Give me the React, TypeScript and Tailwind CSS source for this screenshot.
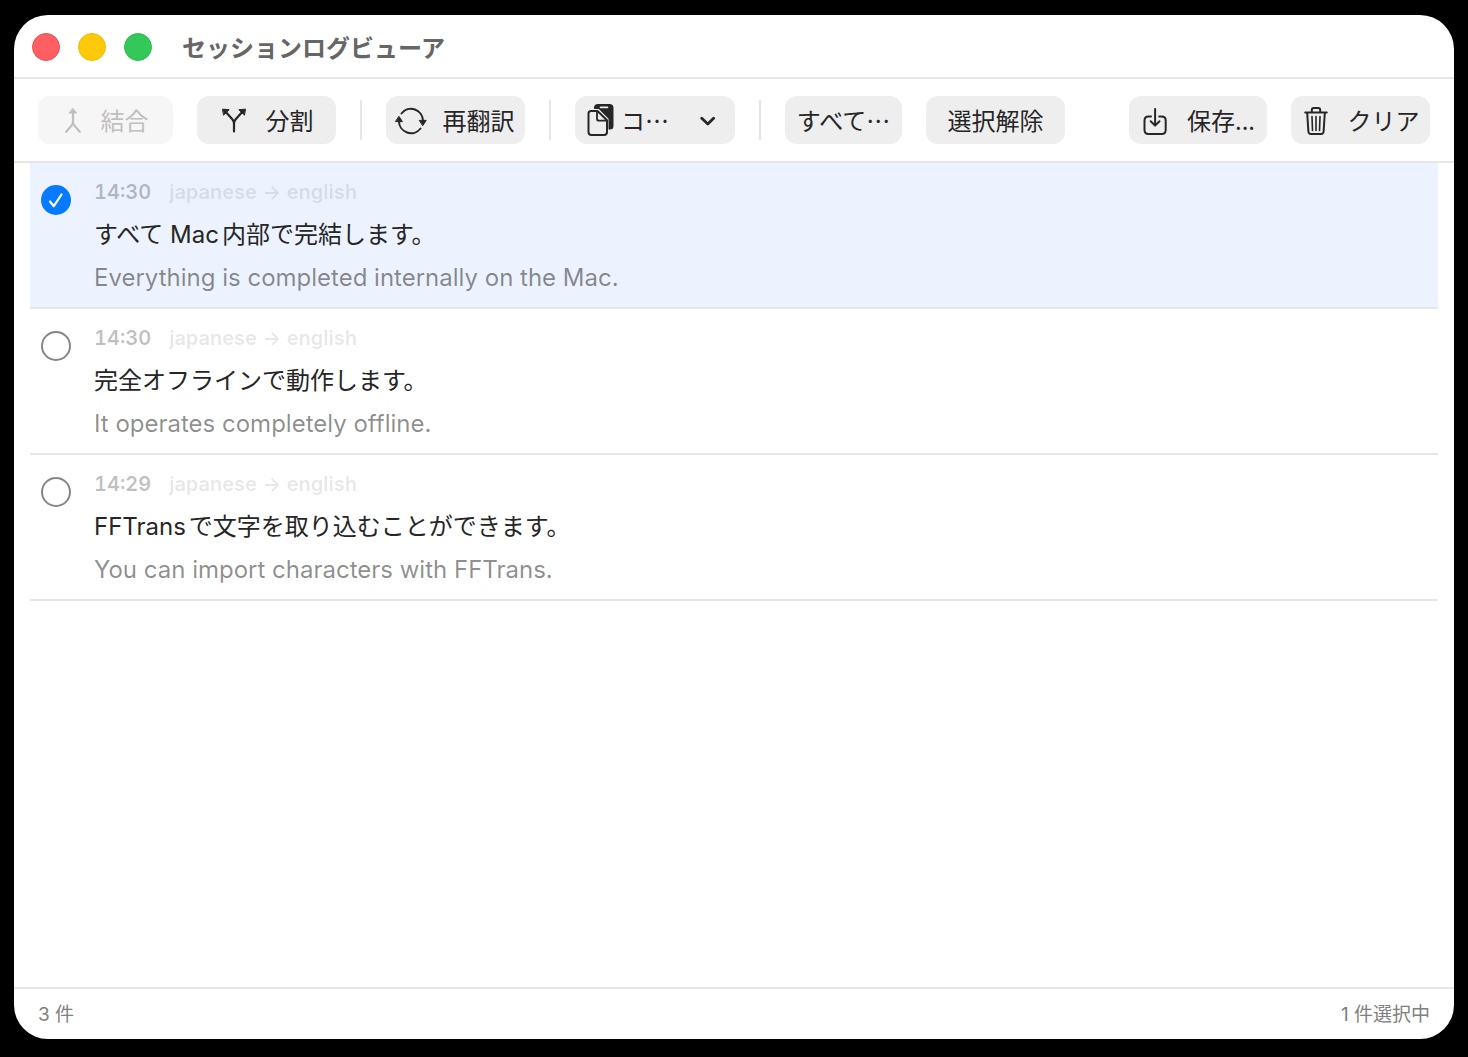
import React, { useState } from "react";
import clsx from "clsx";

interface LogEntry {
  id: number;
  time: string;
  from: string;
  to: string;
  source: string;
  translated: string;
}

const entries: LogEntry[] = [
  {
    id: 1,
    time: "14:30",
    from: "japanese",
    to: "english",
    source: "すべて Mac内部で完結します。",
    translated: "Everything is completed internally on the Mac.",
  },
  {
    id: 2,
    time: "14:30",
    from: "japanese",
    to: "english",
    source: "完全オフラインで動作します。",
    translated: "It operates completely offline.",
  },
  {
    id: 3,
    time: "14:29",
    from: "japanese",
    to: "english",
    source: "FFTransで文字を取り込むことができます。",
    translated: "You can import characters with FFTrans.",
  },
];

/* ---------- icons ---------- */

const MergeIcon = () => (
  <svg className="w-6 h-7 shrink-0" viewBox="0 0 24 28" fill="none" stroke="currentColor" strokeWidth="2.200" strokeLinecap="round" strokeLinejoin="round" aria-hidden="true">
    <path d="M12 6v10c0 1.600-.5 2.700-1.700 3.900L5.200 25.800M12 16c0 1.600.5 2.700 1.700 3.900l5.100 5.900" />
    <path d="M12 2.600L15.600 7H8.400z" fill="currentColor" strokeWidth="1" />
  </svg>
);

const SplitIcon = () => (
  <svg className="w-6 h-7 shrink-0" viewBox="0 0 24 28" fill="none" stroke="currentColor" strokeWidth="2.200" strokeLinecap="round" strokeLinejoin="round" aria-hidden="true">
    <path d="M12 25.500v-8c0-1.800-.5-3-1.700-4.300L4.300 6.500M12 17.500c0-1.800.5-3 1.700-4.300l6-6.700" />
    <path d="M.8 3.200l6.400.5-5.400 5.200zM23.200 3.200l-6.400.5 5.400 5.200z" fill="currentColor" strokeWidth="1" />
  </svg>
);

const RetranslateIcon = () => (
  <svg className="w-8 h-7 shrink-0 overflow-visible" viewBox="0 0 32 28" fill="none" stroke="currentColor" strokeWidth="2" strokeLinecap="round" aria-hidden="true">
    <path d="M6.500 7.500A12 12 0 0 1 28 15" />
    <path d="M25.500 22.500A12 12 0 0 1 4 15" />
    <path d="M24.600 14.400h6.600l-3.300 5zM.8 15.600h6.600l-3.300-5z" fill="currentColor" strokeWidth="1" strokeLinejoin="round" />
  </svg>
);

const CopyIcon = () => (
  <svg className="w-7 h-8 shrink-0" viewBox="0 0 28 32" fill="none" aria-hidden="true">
    <path d="M7 5V4q0-4 4-4h11.500Q26.500 0 26.500 4v18q0 3.500-3.500 3.500h-1.500V14.800L11.800 5z" fill="currentColor" />
    <path d="M13.500 3.400h7" stroke="#eeeeee" strokeWidth="1.600" strokeLinecap="round" />
    <path d="M4 7h6.500l9.500 9.200V28q0 3-3 3H4.500q-3 0-3-3V9.500Q1.500 7 4 7z" fill="#eeeeee" stroke="currentColor" strokeWidth="2" strokeLinejoin="round" />
    <path d="M10 7.500v7.200q0 2 2 2h7.500" stroke="currentColor" strokeWidth="1.800" />
  </svg>
);

const ChevronIcon = () => (
  <svg className="w-4 h-4 shrink-0" viewBox="0 0 16 16" fill="none" stroke="currentColor" strokeWidth="2.800" strokeLinecap="round" strokeLinejoin="round" aria-hidden="true">
    <path d="M2.800 6.300L8.800 12l5.800-5.700" />
  </svg>
);

const SaveIcon = () => (
  <svg className="w-6 h-7 shrink-0 overflow-visible" viewBox="0 0 24 28" fill="none" stroke="currentColor" strokeWidth="2" strokeLinecap="round" strokeLinejoin="round" aria-hidden="true">
    <path d="M8 10.500H5.500q-4 0-4 4V24q0 4 4 4h13.200q4 0 4-4v-9.500q0-4-4-4h-2.500" />
    <path d="M12.100 3v16M7.700 15.200l4.400 4.400 4.400-4.400" />
  </svg>
);

const TrashIcon = () => (
  <svg className="w-6 h-7 shrink-0 overflow-visible" viewBox="0 0 24 28" fill="none" stroke="currentColor" strokeWidth="2" strokeLinecap="round" strokeLinejoin="round" aria-hidden="true">
    <path d="M1.200 6.500h21.600M7.800 6V4q0-2 2-2h4.400q2 0 2 2v2M3.200 7l1.200 18.500q.2 2.500 2.600 2.500h10q2.400 0 2.600-2.500L20.800 7" />
    <path d="M8 10.500l.5 14M12 10.500v14M16 10.500l-.5 14" strokeWidth="1.600" />
  </svg>
);

/* ---------- toolbar ---------- */

interface ToolButtonProps extends React.ButtonHTMLAttributes<HTMLButtonElement> {
  className?: string;
}

const ToolButton: React.FC<ToolButtonProps> = ({ className, children, ...rest }) => (
  <button
    type="button"
    className={clsx(
      "flex h-12 shrink-0 items-center justify-center whitespace-nowrap rounded-xl bg-[#eeeeee] font-['Noto_Sans_CJK_JP',sans-serif] text-[#262626] disabled:bg-[#f6f6f6] disabled:text-[#bfbfbf]",
      className
    )}
    {...rest}
  >
    {children}
  </button>
);

const Divider = () => <div className="h-10 w-0.5 shrink-0 bg-[#e6e6e6]" />;

/* ---------- list row ---------- */

interface RowProps {
  entry: LogEntry;
  checked: boolean;
  onToggle: () => void;
}

const LogRow: React.FC<RowProps> = ({ entry, checked, onToggle }) => (
  <li className={clsx("border-b-2 border-[#e6e6e6]", checked && "bg-[#ecf3fe]")}>
    <label className="flex gap-[23px] py-4 pl-[11px]">
      <span className="mt-1.5 grid size-[30px] shrink-0 place-items-center">
        <input
          type="checkbox"
          checked={checked}
          onChange={onToggle}
          className="col-start-1 row-start-1 size-[30px] appearance-none rounded-full border-2 border-[#868686] checked:border-[#087aff] checked:bg-[#087aff]"
        />
        {checked && (
          <svg className="pointer-events-none col-start-1 row-start-1 size-4" viewBox="0 0 16 16" fill="none" stroke="#fff" strokeWidth="2.200" strokeLinecap="round" strokeLinejoin="round" aria-hidden="true">
            <path d="M2 9.500l3.800 4.700L13.500 2.500" />
          </svg>
        )}
      </span>
      <span className="flex min-w-0 flex-col gap-3">
        <span className="flex gap-[18px] text-xl leading-[26px] font-semibold tabular-nums">
          <span className="text-black/25">{entry.time}</span>
          <span className="text-black/10">
            {entry.from} → {entry.to}
          </span>
        </span>
        <span className="leading-9 text-[#262626] [text-autospace:normal]">{entry.source}</span>
        <span className="leading-[26px] text-black/45">{entry.translated}</span>
      </span>
    </label>
  </li>
);

const App = () => {
  const [selected, setSelected] = useState<number[]>([1]);

  const toggle = (id: number) =>
    setSelected((prev) => (prev.includes(id) ? prev.filter((x) => x !== id) : [...prev, id]));

  return (
    <div className="flex min-h-screen bg-black px-[14px] pt-[15px] pb-[18px] font-['Inter','Noto_Sans_CJK_JP',sans-serif] text-2xl">
      <main className="flex min-w-0 flex-1 flex-col overflow-hidden rounded-[34px] bg-white">
        {/* Title bar */}
        <header className="flex h-16 shrink-0 items-center gap-[30px] border-b-2 border-[#e6e6e6] pt-0.5 pl-[18px]">
          <div className="flex gap-[18px]">
            <button type="button" aria-label="閉じる" className="size-7 rounded-full border border-[#ec4f54] bg-[#ff5f63]" />
            <button type="button" aria-label="しまう" className="size-7 rounded-full border border-[#eebb05] bg-[#fdc908]" />
            <button type="button" aria-label="拡大" className="size-7 rounded-full border border-[#2dba4c] bg-[#34c85a]" />
          </div>
          <h1 className="font-['Noto_Sans_CJK_JP',sans-serif] font-bold text-[#666666]">セッションログビューア</h1>
        </header>

        {/* Toolbar */}
        <div className="flex h-[84px] shrink-0 items-center gap-6 border-b-2 border-[#e6e6e6] px-6" role="toolbar">
          <ToolButton className="w-[135px] gap-4 pr-0.5" disabled>
            <MergeIcon />
            結合
          </ToolButton>
          <ToolButton className="w-[139px] gap-5 pl-0.5">
            <SplitIcon />
            分割
          </ToolButton>
          <Divider />
          <ToolButton className="w-[139px] gap-4 pr-0.5">
            <RetranslateIcon />
            再翻訳
          </ToolButton>
          <Divider />
          <ToolButton className="w-[160px] gap-1.5 pr-2" aria-haspopup="menu">
            <CopyIcon />
            <span className="mr-6">コ…</span>
            <ChevronIcon />
          </ToolButton>
          <Divider />
          <ToolButton className="w-[117px]">すべて…</ToolButton>
          <ToolButton className="w-[139px]">選択解除</ToolButton>
          <ToolButton className="ml-auto w-[138px] gap-5 pl-0.5">
            <SaveIcon />
            保存...
          </ToolButton>
          <ToolButton className="w-[139px] gap-5 pl-0.5">
            <TrashIcon />
            クリア
          </ToolButton>
        </div>

        {/* Log list */}
        <ul className="flex-1 px-4">
          {entries.map((entry) => (
            <LogRow
              key={entry.id}
              entry={entry}
              checked={selected.includes(entry.id)}
              onToggle={() => toggle(entry.id)}
            />
          ))}
        </ul>

        {/* Status bar */}
        <footer className="flex h-[52px] shrink-0 items-center justify-between border-t-2 border-[#e6e6e6] px-6 pt-0.5 text-[19px] text-[#808080]">
          <span>{entries.length} 件</span>
          <span>{selected.length} 件選択中</span>
        </footer>
      </main>
    </div>
  );
};

export default App;
